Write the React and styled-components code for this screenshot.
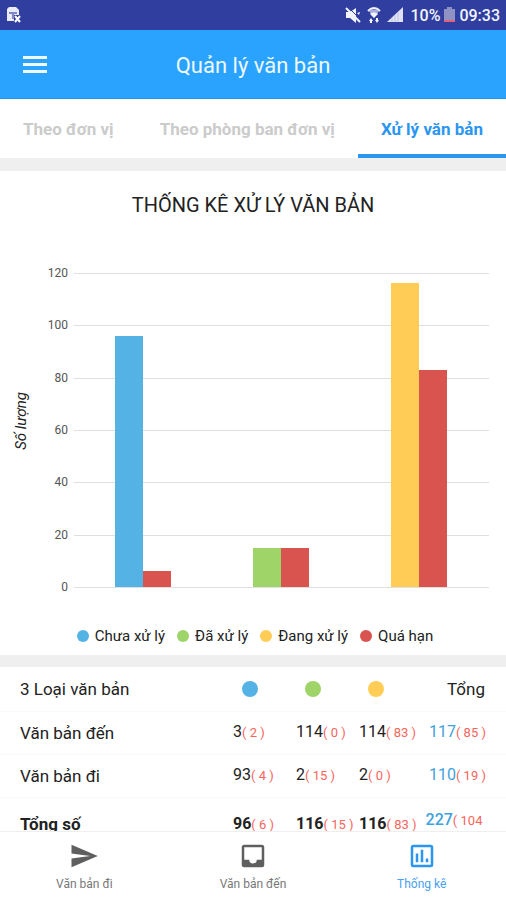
import React from "react";
import styled, { createGlobalStyle } from "styled-components";

const GlobalStyle = createGlobalStyle`
  *, *::before, *::after { box-sizing: border-box; }
  body {
    margin: 0;
    background: #fff;
    color: #222;
    font-family: Roboto, "Noto Sans", sans-serif;
    font-size: 16px;
  }
`;

const colors = {
  blue: "#54b3e4",
  green: "#9fd468",
  yellow: "#ffcd55",
  red: "#d9534f",
  active: "#2b96f0",
};

const Screen = styled.div`
  height: 100vh;
  display: flex;
  flex-direction: column;
`;

const StatusBar = styled.div`
  flex: none;
  height: 30px;
  padding: 0 6px;
  display: flex;
  align-items: center;
  justify-content: space-between;
  background: #303f9f;
  color: #f2f4ff;
  font-size: 16px;
  font-weight: 500;
`;

const StatusGroup = styled.div`
  display: flex;
  align-items: center;
  gap: 4px;
`;

const StatusIcons = styled.div`
  display: flex;
  align-items: center;
  gap: 6px;
`;

const AppBar = styled.header`
  flex: none;
  height: 69px;
  padding: 0 20px;
  display: grid;
  grid-template-columns: 30px 1fr 30px;
  align-items: center;
  background: #2aa3ff;
  border-bottom: 1px solid #2493ea;
  color: #eef8ff;
`;

const MenuButton = styled.button`
  display: flex;
  padding: 0 3px;
  border: 0;
  background: none;
  color: inherit;
`;

const AppTitle = styled.h1`
  margin: 0;
  padding-top: 2px;
  text-align: center;
  font-size: 22px;
  font-weight: 400;
`;

const Tabs = styled.div`
  flex: none;
  height: 59px;
  display: flex;
`;

const Tab = styled.button`
  flex: 1 1 auto;
  padding: 5px 0 0;
  border: 0;
  border-bottom: 4px solid ${(p) => (p.$active ? colors.active : "transparent")};
  background: none;
  color: ${(p) => (p.$active ? colors.active : "#cbcbcb")};
  font-family: inherit;
  font-size: 17px;
  font-weight: 700;
  white-space: nowrap;
`;

const Content = styled.main`
  flex: 1;
  min-height: 0;
  overflow-y: auto;
  scrollbar-width: none;
  border-top: 13px solid #efefef;
`;

const ChartPanel = styled.section`
  border-bottom: 12px solid #efefef;
`;

const ChartTitle = styled.h2`
  margin: 0;
  padding: 22px 0 0;
  text-align: center;
  font-size: 20px;
  line-height: 24px;
  font-weight: 400;
`;

const Chart = styled.svg`
  display: block;
  width: 100%;
  height: auto;
`;

const AxisText = styled.text`
  fill: #555;
  font-size: 12px;
  text-anchor: end;
`;

const AxisTitle = styled.text`
  fill: #222;
  font-size: 15px;
  font-style: italic;
  text-anchor: middle;
`;

const Legend = styled.ul`
  margin: 0;
  padding: 7px 0 9px 4px;
  display: flex;
  justify-content: center;
  gap: 12px;
  list-style: none;
  font-size: 15px;
  line-height: 20px;
`;

const LegendItem = styled.li`
  display: flex;
  align-items: center;
  gap: 6px;
`;

const Dot = styled.span`
  display: inline-block;
  width: ${(p) => p.$size}px;
  height: ${(p) => p.$size}px;
  border-radius: 50%;
  background: ${(p) => colors[p.$color]};
`;

const Table = styled.table`
  width: 100%;
  table-layout: fixed;
  border-collapse: collapse;
  line-height: 24px;
`;

const FirstCol = styled.col``;

const ValueCol = styled.col`
  width: 63px;
`;

const TotalCol = styled.col`
  width: 84px;
`;

const HeadRow = styled.tr`
  height: 44px;
  border-bottom: 1px solid #fafafa;
`;

const Row = styled.tr`
  height: 43px;
  border-bottom: 1px solid #fafafa;
  font-weight: ${(p) => (p.$sum ? 700 : 400)};
`;

const NameCell = styled.th`
  padding: ${(p) => (p.$sum ? "14px" : "0")} 0 0 20px;
  vertical-align: ${(p) => (p.$sum ? "top" : "middle")};
  text-align: left;
  font-size: 17px;
  font-weight: ${(p) => (p.$sum ? 700 : 400)};
`;

const DotCell = styled.th`
  padding: 0 0 0 9px;
  text-align: left;
`;

const HeadDot = styled(Dot)`
  display: block;
`;

const ValueCell = styled.td`
  padding: ${(p) => (p.$sum ? "14px" : "0")} 0 0;
  vertical-align: ${(p) => (p.$sum ? "top" : "middle")};
  white-space: nowrap;
`;

const TotalCell = styled.td`
  padding: ${(p) => (p.$sum ? "10px" : "0")} 20px 0 0;
  text-align: ${(p) => (p.$sum ? "center" : "right")};
  vertical-align: ${(p) => (p.$sum ? "top" : "middle")};
  white-space: ${(p) => (p.$sum ? "normal" : "nowrap")};
  color: #3da2dd;
  font-weight: ${(p) => (p.$sum ? 500 : 400)};
`;

const TotalHead = styled.th`
  padding: 0 21px 0 0;
  text-align: right;
  font-size: 17px;
  font-weight: 400;
`;

const Late = styled.small`
  color: #f9645c;
  font-size: 13px;
  font-weight: 400;
`;

const BottomNav = styled.nav`
  flex: none;
  height: 69px;
  display: grid;
  grid-template-columns: repeat(3, 1fr);
  border-top: 1px solid #efefef;
  background: #fff;
`;

const NavLink = styled.a`
  padding-top: 9px;
  display: flex;
  flex-direction: column;
  align-items: center;
  gap: 4px;
  color: ${(p) => (p.$active ? colors.active : "#5f5f5f")};
  font-size: 12px;
  line-height: 18px;
  text-decoration: none;
`;

const NavLabel = styled.span`
  color: ${(p) => (p.$active ? "#4aa0f5" : "#777")};
`;

const NavIcon = ({ children }) => (
  <svg width="30" height="30" viewBox="0 0 24 24" fill="currentColor" aria-hidden="true">
    {children}
  </svg>
);

const FileIcon = () => (
  <svg width="16" height="18" viewBox="0 0 16 18" aria-hidden="true">
    <path d="M3 1h7l3 3v11H1V3z" fill="#e9eafb" />
    <path d="M3 6h8v2H8v5H6V8H3z" fill="#8087c8" />
    <path d="M8 9h7v8H8z" fill="#303f9f" />
    <path d="M9 10l5 6M14 10l-5 6" stroke="#fff" strokeWidth="2" />
  </svg>
);

const MuteIcon = () => (
  <svg width="16" height="16" viewBox="0 0 16 16" fill="currentColor" aria-hidden="true">
    <path d="M1 5v6h4l6 5V1L5 5z" />
    <path d="M4 1l12 12" stroke="#303f9f" strokeWidth="1" />
    <path d="M1 1l14 14" stroke="currentColor" strokeWidth="2" />
    <path d="M12 6l2 2 1-3z" />
  </svg>
);

const WifiIcon = () => (
  <svg width="14" height="17" viewBox="0 0 14 17" fill="none" stroke="currentColor" aria-hidden="true">
    <path d="M1 4c4-4 8-4 12 0" strokeWidth="2" />
    <path d="M2 4c3-2 7-2 10 0L7 11z" fill="#aab0dc" stroke="none" />
    <path d="M3 7c2-2 6-2 8 0l-4 4z" fill="currentColor" stroke="none" />
    <path d="M4 11l2 3H5v2H3v-2H2zM10 16l-2-3h1v-2h2v2h1z" fill="currentColor" stroke="none" />
  </svg>
);

const SignalIcon = () => (
  <svg width="17" height="16" viewBox="0 0 17 16" aria-hidden="true">
    <path d="M0 15L16 0v15z" fill="#dfe2f4" />
    <path d="M5 11v4M8 8v7M11 5v10" stroke="#bfc4e6" />
  </svg>
);

const BatteryIcon = () => (
  <svg width="11" height="16" viewBox="0 0 11 16" aria-hidden="true">
    <path d="M3 0h5v2h3v12H0V2h3z" fill="#8e93c4" />
    <path d="M0 13h11v2H0z" fill="#e2607c" />
  </svg>
);

const MenuIcon = () => (
  <svg width="24" height="18" viewBox="0 0 24 18" fill="currentColor" aria-hidden="true">
    <path d="M0 1h24v3H0zM0 8h24v3H0zM0 15h24v3H0z" />
  </svg>
);

const ticks = [120, 100, 80, 60, 40, 20, 0];
const bars = [
  { x: 115, value: 96, color: "blue" },
  { x: 143, value: 6, color: "red" },
  { x: 253, value: 15, color: "green" },
  { x: 281, value: 15, color: "red" },
  { x: 391, value: 116, color: "yellow" },
  { x: 419, value: 83, color: "red" },
];
const baseline = 370;
const toY = (value) => Math.round(baseline - (value * 314) / 120);

const BarChart = () => (
  <Chart viewBox="0 0 506 402" role="img" aria-label="Thống kê xử lý văn bản">
    {ticks.map((t) => (
      <React.Fragment key={t}>
        <AxisText x="68" y={toY(t) + 4}>{t}</AxisText>
        <rect x="74" y={toY(t)} width="415" height="1" fill="#dfdfdf" />
      </React.Fragment>
    ))}
    {bars.map((b) => (
      <rect
        key={b.x}
        x={b.x}
        y={toY(b.value)}
        width="28"
        height={baseline - toY(b.value)}
        fill={colors[b.color]}
      />
    ))}
    <AxisTitle x="26" y="204" transform="rotate(-90 26 204)">Số lượng</AxisTitle>
  </Chart>
);

const legend = [
  ["blue", "Chưa xử lý"],
  ["green", "Đã xử lý"],
  ["yellow", "Đang xử lý"],
  ["red", "Quá hạn"],
];

const rows = [
  { name: "Văn bản đến", values: [[3, 2], [114, 0], [114, 83]], total: [117, 85] },
  { name: "Văn bản đi", values: [[93, 4], [2, 15], [2, 0]], total: [110, 19] },
  { name: "Tổng số", values: [[96, 6], [116, 15], [116, 83]], total: [227, 104], sum: true },
];

export default function App() {
  return (
    <Screen>
      <GlobalStyle />
      <StatusBar>
        <FileIcon />
        <StatusGroup>
          <StatusIcons>
            <MuteIcon />
            <WifiIcon />
            <SignalIcon />
            <span>10%</span>
          </StatusIcons>
          <BatteryIcon />
          <span>09:33</span>
        </StatusGroup>
      </StatusBar>
      <AppBar>
        <MenuButton aria-label="Menu"><MenuIcon /></MenuButton>
        <AppTitle>Quản lý văn bản</AppTitle>
      </AppBar>
      <Tabs role="tablist">
        <Tab role="tab" aria-selected="false">Theo đơn vị</Tab>
        <Tab role="tab" aria-selected="false">Theo phòng ban đơn vị</Tab>
        <Tab role="tab" aria-selected="true" $active>Xử lý văn bản</Tab>
      </Tabs>
      <Content>
        <ChartPanel>
          <ChartTitle>THỐNG KÊ XỬ LÝ VĂN BẢN</ChartTitle>
          <BarChart />
          <Legend>
            {legend.map(([color, label]) => (
              <LegendItem key={color}>
                <Dot $size={12} $color={color} />
                {label}
              </LegendItem>
            ))}
          </Legend>
        </ChartPanel>
        <Table>
          <colgroup>
            <FirstCol />
            <ValueCol />
            <ValueCol />
            <ValueCol />
            <TotalCol />
          </colgroup>
          <thead>
            <HeadRow>
              <NameCell scope="col">3 Loại văn bản</NameCell>
              {legend.slice(0, 3).map(([color, label]) => (
                <DotCell key={color} scope="col" aria-label={label}>
                  <HeadDot $size={16} $color={color} />
                </DotCell>
              ))}
              <TotalHead scope="col">Tổng</TotalHead>
            </HeadRow>
          </thead>
          <tbody>
            {rows.map((r) => (
              <Row key={r.name} $sum={r.sum}>
                <NameCell scope="row" $sum={r.sum}>{r.name}</NameCell>
                {r.values.map(([n, late], i) => (
                  <ValueCell key={i} $sum={r.sum}>{n}<Late>( {late} )</Late></ValueCell>
                ))}
                <TotalCell $sum={r.sum}>{r.total[0]}<Late>( {r.total[1]} )</Late></TotalCell>
              </Row>
            ))}
          </tbody>
        </Table>
      </Content>
      <BottomNav>
        <NavLink href="#van-ban-di">
          <NavIcon><path d="M2 21l21-9L2 3v7l15 2-15 2z" /></NavIcon>
          <NavLabel>Văn bản đi</NavLabel>
        </NavLink>
        <NavLink href="#van-ban-den">
          <NavIcon>
            <path d="M19 3H5a2 2 0 0 0-2 2v14a2 2 0 0 0 2 2h14a2 2 0 0 0 2-2V5a2 2 0 0 0-2-2zm0 12h-4a3 3 0 0 1-6 0H5V5h14z" />
          </NavIcon>
          <NavLabel>Văn bản đến</NavLabel>
        </NavLink>
        <NavLink href="#thong-ke" aria-current="page" $active>
          <NavIcon>
            <path d="M19 3H5a2 2 0 0 0-2 2v14a2 2 0 0 0 2 2h14a2 2 0 0 0 2-2V5a2 2 0 0 0-2-2zm0 16H5V5h14zM7 10h2v7H7zM11 7h2v10h-2zM15 14h2v3h-2z" />
          </NavIcon>
          <NavLabel $active>Thống kê</NavLabel>
        </NavLink>
      </BottomNav>
    </Screen>
  );
}
